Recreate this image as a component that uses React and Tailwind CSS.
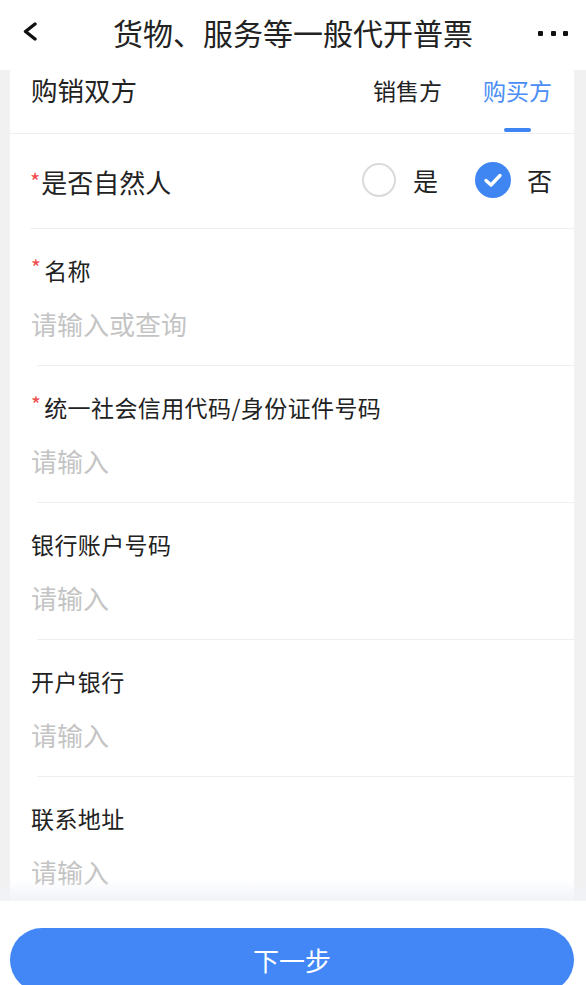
import React from "react";

const font = { fontFamily: '"Noto Sans CJK SC", "Noto Sans", sans-serif' };

function Field({ label, required, placeholder, inset = "ml-[27px]" }) {
  return (
    <div className="flex flex-col">
      <div className="pl-[21px] pt-[25px] pb-[23px]">
        <div className="flex items-center h-[32px] text-[23px] tracking-[0.4px] text-[#222] leading-[32px]">
          {required && <span className="text-[#f04b4b] text-[21px] mr-[3px] -translate-y-[3px]">*</span>}
          <span>{label}</span>
        </div>
        <div className="mt-[20px] h-[36px] leading-[36px] text-[26px] text-[#c4c4c4]">{placeholder}</div>
      </div>
      <div className={`${inset} h-px bg-[#eeeff1]`} />
    </div>
  );
}

export default function App() {
  return (
    <div className="w-[586px] h-[985px] flex flex-col overflow-hidden bg-white" style={font}>
      {/* header */}
      <div className="h-[70px] shrink-0 bg-white relative flex items-center justify-center">
        <svg className="absolute left-[20px] top-[21px]" width="20" height="20" viewBox="0 0 20 20">
          <path d="M15 3 L5.5 10.5 L15 18" fill="none" stroke="#111" strokeWidth="3.4" strokeLinecap="round" strokeLinejoin="round" />
        </svg>
        <div className="text-[30px] leading-[40px] text-[#222] -mt-[6px]">货物、服务等一般代开普票</div>
        <div className="absolute left-[538px] top-[31px] flex gap-[7.5px]">
          <span className="w-[5px] h-[5px] bg-[#111] rounded-[1px]" />
          <span className="w-[5px] h-[5px] bg-[#111] rounded-[1px]" />
          <span className="w-[5px] h-[5px] bg-[#111] rounded-[1px]" />
        </div>
      </div>

      {/* scroll area */}
      <div className="flex-1 bg-[#f1f1f1] pl-[10px] pr-[12px] overflow-hidden relative">
        <div className="bg-white">
          {/* tab row */}
          <div className="h-[64px] flex justify-between pl-[21px] pr-[22px] border-b border-[#eeeff1]">
            <div className="pt-[4px] text-[26.5px] leading-[32px] text-[#222]">购销双方</div>
            <div className="flex gap-[41px]">
              <div className="flex flex-col items-center pt-[4px]">
                <div className="text-[23px] leading-[32px] text-[#222]">销售方</div>
              </div>
              <div className="flex flex-col items-center pt-[4px]">
                <div className="text-[23px] leading-[32px] text-[#4a8df6]">购买方</div>
                <div className="mt-auto mb-px w-[27px] h-[4px] rounded-full bg-[#3f84f3]" />
              </div>
            </div>
          </div>

          {/* radio row */}
          <div className="flex flex-col">
            <div className="h-[94px] flex items-center justify-between pl-[20px] pr-[22px]">
              <div className="flex items-center text-[26px] leading-[36px] text-[#222] pt-[2px]">
                <span className="text-[#f04b4b] text-[22px] mr-[1px] -translate-y-[2px]">*</span>
                <span>是否自然人</span>
              </div>
              <div className="flex items-center -mt-[3px]">
                <span className="w-[34px] h-[34px] rounded-full border-2 border-[#dadada]" />
                <span className="ml-[17px] text-[25px] leading-[34px] text-[#222]">是</span>
                <span className="ml-[37px] w-[36px] h-[36px] rounded-full bg-[#3f86f3] flex items-center justify-center">
                  <svg width="22" height="18" viewBox="0 0 22 18">
                    <path d="M4 9.5 L9 14 L18 4.5" fill="none" stroke="#fff" strokeWidth="3.4" strokeLinecap="round" strokeLinejoin="round" />
                  </svg>
                </span>
                <span className="ml-[16px] text-[25px] leading-[34px] text-[#222]">否</span>
              </div>
            </div>
            <div className="ml-[20px] h-px bg-[#eeeff1]" />
          </div>

          <Field label="名称" required placeholder="请输入或查询" />
          <Field label="统一社会信用代码/身份证件号码" required placeholder="请输入" />
          <Field label="银行账户号码" placeholder="请输入" />
          <Field label="开户银行" placeholder="请输入" />
          <Field label="联系地址" placeholder="请输入" />
        </div>
        <div className="absolute left-0 right-0 bottom-0 h-[22px] bg-gradient-to-b from-[rgba(245,246,250,0)] to-[rgba(240,242,247,0.9)]" />
      </div>

      {/* footer */}
      <div className="h-[84px] shrink-0 bg-white pl-[10px] pr-[12px] pt-[27px]">
        <div className="h-[64px] rounded-full bg-[#4287f5] flex items-center justify-center text-white text-[26px] leading-[36px]">
          下一步
        </div>
      </div>
    </div>
  );
}
